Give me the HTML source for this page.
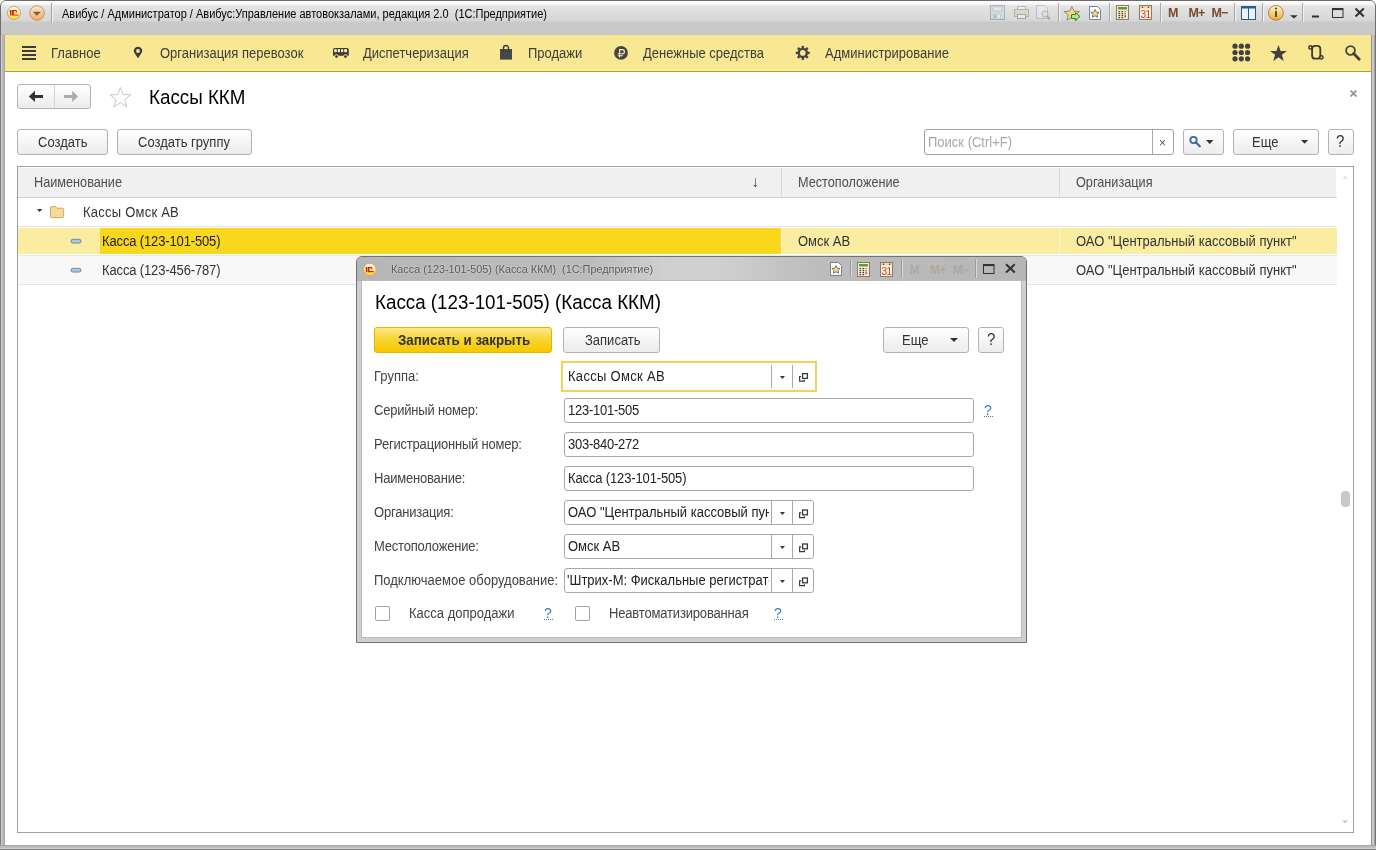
<!DOCTYPE html>
<html><head><meta charset="utf-8">
<style>
*{box-sizing:border-box;margin:0;padding:0}
html,body{width:1376px;height:850px;overflow:hidden;background:#fff;-webkit-font-smoothing:antialiased;font-family:"Liberation Sans",sans-serif;color:#333}
.a{position:absolute}
.t,.lbl,.val{will-change:transform;transform:translateY(1px) scaleY(1.1);transform-origin:0 12.5px}
.big{transform:translateY(1px) scaleY(1.07)!important;transform-origin:0 17.5px!important}
.ttl{transform:translateY(0.5px) scaleY(1.15)!important;transform-origin:0 11.8px!important}
.nos{transform:none!important}
.t{position:absolute;white-space:nowrap;font-size:13px;line-height:16px}
#frame{left:0;top:0;width:1376px;height:850px;background:linear-gradient(90deg,#8a8a8a 0,#c4c4c4 2px,#b8b8b8 5px);border-radius:6px 6px 0 0;border:1px solid #6d6d6d}
#titlebar{left:1px;top:1px;width:1374px;height:34px;border-radius:5px 5px 0 0;background:linear-gradient(#fefefe 0px,#f8f8f8 3px,#e4e4e4 5px,#d6d6d6 20px,#c9c9c9 21px,#c8c8c8 33px,#c4c2b0 34px)}
#menubar{left:5px;top:35px;width:1366px;height:37px;background:linear-gradient(#f9e893 0,#f9e893 34px,#fdf08a 35px);border-bottom:1px solid #aa9c42}
#content{left:5px;top:72px;width:1366px;height:773px;background:#fff}
.btn{position:absolute;border:1px solid #b3b3b3;border-radius:3px;background:linear-gradient(#ffffff,#ececec);}
.fld{position:absolute;border:1px solid #a8a8a8;border-radius:3px;background:#fff}
.lbl{position:absolute;white-space:nowrap;font-size:13px;line-height:16px;color:#444}
.val{position:absolute;white-space:nowrap;font-size:13px;line-height:16px;color:#222;overflow:hidden}
</style></head><body>
<div id="frame" class="a"></div>
<div id="titlebar" class="a"></div>
<div id="menubar" class="a"></div>
<div id="content" class="a"></div>
<div class="a" style="left:0;top:35px;width:5px;height:815px;background:linear-gradient(90deg,#7a7a7a 0,#7a7a7a 1px,#d0d0d0 1px,#d0d0d0 2px,#b8b8b8 2px,#b8b8b8 4px,#a8a8a8 4px)"></div>
<div class="a" style="left:1371px;top:35px;width:5px;height:815px;background:linear-gradient(90deg,#949494 0,#949494 1px,#c8c8c8 1px,#c8c8c8 3px,#a4a4a4 3px,#a4a4a4 4px,#747474 4px)"></div>
<div class="a" style="left:0;top:845px;width:1376px;height:5px;background:linear-gradient(#a8a8a8 0,#a8a8a8 1px,#b8b8b8 1px,#b8b8b8 2px,#c0c0c0 2px,#c0c0c0 3px,#d0d0d0 3px,#d0d0d0 4px,#808080 4px)"></div>

<!-- title text -->
<div class="t ttl" style="left:62px;top:5px;font-size:11px;color:#000">Авибус / Администратор / Авибус:Управление автовокзалами, редакция 2.0&nbsp; (1С:Предприятие)</div>

<!-- menu items -->
<div class="t" style="left:51px;top:45px;color:#3c3c3c">Главное</div>
<div class="t" style="left:160px;top:45px;color:#3c3c3c">Организация перевозок</div>
<div class="t" style="left:363px;top:45px;color:#3c3c3c">Диспетчеризация</div>
<div class="t" style="left:528px;top:45px;color:#3c3c3c">Продажи</div>
<div class="t" style="left:643px;top:45px;color:#3c3c3c">Денежные средства</div>
<div class="t" style="left:825px;top:45px;color:#3c3c3c">Администрирование</div>

<!-- nav -->
<div class="btn" style="left:17px;top:84px;width:74px;height:25px"></div>
<div class="a" style="left:54px;top:85px;width:1px;height:23px;background:#d4d4d4"></div>
<div class="t big" style="left:149px;top:86px;font-size:18.8px;line-height:22px;color:#000">Кассы ККМ</div>


<!-- toolbar -->
<div class="btn" style="left:17px;top:129px;width:91px;height:26px"></div>
<div class="t" style="left:38px;top:134px;color:#333">Создать</div>
<div class="btn" style="left:117px;top:129px;width:135px;height:26px"></div>
<div class="t" style="left:138px;top:134px;color:#333">Создать группу</div>

<div class="fld" style="left:924px;top:129px;width:250px;height:26px;border-color:#a0a0a0"></div>
<div class="a" style="left:1152px;top:130px;width:1px;height:24px;background:#a8a8a8"></div>
<div class="t" style="left:928px;top:134px;color:#a8a8a8">Поиск (Ctrl+F)</div>
<div class="t" style="left:1159px;top:134px;font-size:12px;color:#555">×</div>
<div class="btn" style="left:1183px;top:129px;width:41px;height:26px"></div>
<div class="btn" style="left:1233px;top:129px;width:86px;height:26px"></div>
<div class="t" style="left:1252px;top:134px;color:#333">Еще</div>
<div class="btn" style="left:1328px;top:129px;width:26px;height:26px"></div>
<div class="t" style="left:1336px;top:133px;font-size:15px;color:#333">?</div>

<!-- table -->
<div class="a" style="left:17px;top:166px;width:1337px;height:667px;border:1px solid #a0a0a0"></div>
<div class="a" style="left:18px;top:168px;width:1319px;height:30px;background:linear-gradient(90deg,#f0f0f0 1318px,#fff 1318px);border-bottom:1px solid #d2d2d2"></div>
<div class="a" style="left:781px;top:168px;width:1px;height:29px;background:#d8d8d8"></div>
<div class="a" style="left:1059px;top:168px;width:1px;height:29px;background:#d8d8d8"></div>
<div class="t" style="left:34px;top:174px;color:#4d4d4d;font-size:12.7px">Наименование</div>
<div class="t" style="left:798px;top:174px;color:#4d4d4d;font-size:12.7px">Местоположение</div>
<div class="t" style="left:1076px;top:174px;color:#4d4d4d;font-size:12.7px">Организация</div>
<div class="t" style="left:752px;top:173px;font-size:14px;color:#333">↓</div>

<!-- rows -->
<div class="a" style="left:18px;top:226px;width:1319px;height:1px;background:#e4e4e4"></div>
<div class="t" style="left:83px;top:204px;color:#333;letter-spacing:0.23px">Кассы Омск АВ</div>

<div class="a" style="left:18px;top:228px;width:1319px;height:26px;background:#faeca0"></div>
<div class="a" style="left:100px;top:228px;width:681px;height:26px;background:#f9d71c"></div>
<div class="a" style="left:781px;top:228px;width:1px;height:26px;background:#fffbe8"></div>
<div class="a" style="left:1059px;top:228px;width:1px;height:26px;background:#fdf5cf"></div>
<div class="t" style="left:102px;top:233px;color:#222;letter-spacing:-0.14px">Касса (123-101-505)</div>
<div class="t" style="left:798px;top:233px;color:#333">Омск АВ</div>
<div class="t" style="left:1076px;top:233px;color:#333">ОАО "Центральный кассовый пункт"</div>

<div class="a" style="left:18px;top:255px;width:1319px;height:1px;background:#e8e8e8"></div>
<div class="a" style="left:18px;top:256px;width:1319px;height:28px;background:#f8f8f8"></div>
<div class="a" style="left:18px;top:284px;width:1319px;height:1px;background:#e4e4e4"></div>
<div class="t" style="left:102px;top:262px;color:#333;letter-spacing:-0.14px">Касса (123-456-787)</div>
<div class="t" style="left:1076px;top:262px;color:#333">ОАО "Центральный кассовый пункт"</div>

<!-- scrollbar -->
<div class="a" style="left:1341px;top:491px;width:9px;height:16px;background:#c8c8c8;border-radius:4px"></div>

<!-- main icons -->
<svg class="a" style="left:0;top:0" width="1376" height="850">
<defs>
<linearGradient id="g1c" x1="0" y1="0" x2="0" y2="1"><stop offset="0" stop-color="#fffbe0"/><stop offset="0.55" stop-color="#fff2a0"/><stop offset="0.75" stop-color="#fde848"/><stop offset="1" stop-color="#f8dc40"/></linearGradient>
<linearGradient id="gdd" x1="0" y1="0" x2="0" y2="1"><stop offset="0" stop-color="#fde9d0"/><stop offset="1" stop-color="#eeac5c"/></linearGradient>
<linearGradient id="ginfo" x1="0" y1="0" x2="0" y2="1"><stop offset="0" stop-color="#fff4d8"/><stop offset="1" stop-color="#f0a838"/></linearGradient>
</defs>
<!-- 1C logo -->
<circle cx="14" cy="12.9" r="6.5" fill="url(#g1c)" stroke="#b89470" stroke-width="0.8"/>
<path d="M9 11.4 L10 10 L11.5 10 L11.5 15.6 L10 15.6 L10 11.4 Z" fill="#c42a10"/>
<path d="M12 10 L16.6 10 L16.6 11.2 L13.8 11.2 L13.8 14.4 L18.5 14.4 L18.5 15.6 L12 15.6 Z" fill="#d42010"/><rect x="15.8" y="11.2" width="1.3" height="1.4" fill="#b83010"/>
<!-- dropdown circle -->
<circle cx="37" cy="13" r="7.3" fill="url(#gdd)" stroke="#b89070" stroke-width="0.9"/>
<path d="M32.9 11.8 L40.9 11.8 L36.9 15.8 Z" fill="#6d6152"/>
<rect x="51" y="3" width="1" height="20" fill="#a0a0a0"/><rect x="52" y="3" width="1" height="20" fill="#f4f4f4"/>

<!-- faded save -->
<g opacity="0.45">
<rect x="990.5" y="5.5" width="14" height="14" fill="#c8d8e0" stroke="#5a7888"/>
<rect x="993" y="7" width="9" height="4" fill="#e8f0f4" stroke="#6a8898" stroke-width="0.6"/>
<rect x="993.5" y="14" width="7" height="5" fill="#f0f0f0" stroke="#6a8898" stroke-width="0.6"/>
<rect x="994.5" y="15" width="2" height="3" fill="#607080"/>
</g>
<!-- faded printer -->
<g opacity="0.4">
<rect x="1017.5" y="6.5" width="8" height="4" fill="#fff" stroke="#777"/>
<rect x="1014.5" y="9.5" width="14" height="7" fill="#d8c8a8" stroke="#777"/>
<rect x="1017.5" y="14.5" width="8" height="4" fill="#fff" stroke="#555"/>
</g>
<!-- faded preview -->
<g opacity="0.4">
<path d="M1036.5 5.5 L1044.5 5.5 L1047.5 8.5 L1047.5 18.5 L1036.5 18.5 Z" fill="#e8eef4" stroke="#7890a8"/>
<circle cx="1045" cy="14" r="3" fill="#e0e0e0" stroke="#7a6a5a"/>
<path d="M1047 16 L1050 19.5" stroke="#8a5a3a" stroke-width="2"/>
</g>
<rect x="1058" y="3" width="1" height="19" fill="#a8a8a8"/><rect x="1059" y="3" width="1" height="19" fill="#f2f2f2"/>
<!-- star with arrow -->
<path d="M1071.8 6.5 L1074 11.2 L1079.5 11.6 L1075.3 15 L1076.6 20.3 L1071.8 17.4 L1067 20.3 L1068.3 15 L1064.2 11.6 L1069.6 11.2 Z" fill="#f8d890" stroke="#8a8070" stroke-width="0.9"/>
<path d="M1071.5 14.5 L1075.5 14.5 L1075.5 12.5 L1080 16.5 L1075.5 20.5 L1075.5 18.5 L1071.5 18.5 Z" fill="#a8e888" stroke="#2a7a1a" stroke-width="0.9"/>
<!-- doc with star -->
<path d="M1089.5 6.5 L1097.5 6.5 L1100.5 9.5 L1100.5 19.5 L1089.5 19.5 Z" fill="#fbfdff" stroke="#70849a"/>
<path d="M1095 9.5 L1096.4 12.2 L1099 12.5 L1097.1 14.4 L1097.6 17.2 L1095 15.8 L1092.4 17.2 L1092.9 14.4 L1091 12.5 L1093.6 12.2 Z" fill="#f4d890" stroke="#6a5a40" stroke-width="0.8"/>
<rect x="1109" y="3" width="1" height="19" fill="#a8a8a8"/><rect x="1110" y="3" width="1" height="19" fill="#f2f2f2"/>
<!-- calculator -->
<rect x="1116.5" y="5.5" width="12" height="14" fill="#f8ecd4" stroke="#8a7c64"/>
<rect x="1118" y="7" width="9" height="2.5" fill="#5a9a40"/>
<g fill="#4a3a2a">
<rect x="1118.5" y="11" width="1.6" height="1.2"/><rect x="1121.5" y="11" width="1.6" height="1.2"/><rect x="1124.5" y="11" width="1.2" height="1.2" fill="#e05040"/>
<rect x="1118.5" y="13" width="1.6" height="1.2"/><rect x="1121.5" y="13" width="1.6" height="1.2"/><rect x="1124.5" y="13.3" width="1.2" height="1.2"/>
<rect x="1118.5" y="15" width="1.6" height="1.2"/><rect x="1121.5" y="15" width="1.6" height="1.2"/><rect x="1124.5" y="15.3" width="1.2" height="2"/>
<rect x="1118.5" y="17" width="1.6" height="1.2"/><rect x="1121.5" y="17" width="1.6" height="1.2"/>
</g>
<!-- calendar -->
<rect x="1139.5" y="5.5" width="12" height="14" fill="#fdf3e4" stroke="#8a7c64"/>
<rect x="1140" y="6" width="11" height="2.5" fill="#f0d8a0"/>
<circle cx="1142.5" cy="7.3" r="0.7" fill="#3a2a1a"/><circle cx="1148.5" cy="7.3" r="0.7" fill="#3a2a1a"/>
<text x="1140.5" y="18.3" font-family="Liberation Sans" font-size="10" fill="#d03818" letter-spacing="-0.5">31</text>
<rect x="1160" y="3" width="1" height="19" fill="#a8a8a8"/><rect x="1161" y="3" width="1" height="19" fill="#f2f2f2"/>
<!-- M M+ M- -->
<text x="1168" y="17.3" font-family="Liberation Sans" font-weight="bold" font-size="12.5" fill="#7a4a2a">M</text>
<text x="1188.5" y="17.3" font-family="Liberation Sans" font-weight="bold" font-size="12.5" fill="#7a4a2a" letter-spacing="-0.8">M+</text>
<text x="1211.5" y="17.3" font-family="Liberation Sans" font-weight="bold" font-size="12.5" fill="#7a4a2a" letter-spacing="-0.8">M−</text>
<rect x="1234" y="3" width="1" height="19" fill="#a8a8a8"/><rect x="1235" y="3" width="1" height="19" fill="#f2f2f2"/>
<!-- panel icon -->
<rect x="1241.5" y="6.5" width="14" height="13" fill="#eaf2fa" stroke="#2a5a8a"/>
<rect x="1241.5" y="6.5" width="14" height="2" fill="#2a5a8a"/>
<rect x="1248" y="8" width="1" height="11" fill="#2a5a8a"/>
<rect x="1262" y="3" width="1" height="19" fill="#a8a8a8"/><rect x="1263" y="3" width="1" height="19" fill="#f2f2f2"/>
<!-- info -->
<circle cx="1275.9" cy="12.9" r="7.4" fill="url(#ginfo)" stroke="#b07a30" stroke-width="0.9"/>
<rect x="1275" y="11" width="2" height="6" fill="#3a6a10"/><circle cx="1276" cy="8.6" r="1.1" fill="#3a6a10"/>
<path d="M1290 15.2 L1297.8 15.2 L1293.9 18.5 Z" fill="#333"/>
<rect x="1302" y="3" width="1" height="19" fill="#a8a8a8"/><rect x="1303" y="3" width="1" height="19" fill="#f2f2f2"/>
<!-- min max close -->
<rect x="1312" y="15.5" width="7" height="2" fill="#333"/>
<rect x="1332.5" y="8.5" width="10.5" height="9" fill="none" stroke="#333" stroke-width="1"/>
<rect x="1332.5" y="8.5" width="10.5" height="1.6" fill="#333"/>
<path d="M1355.5 8.5 L1363.8 16.5 M1363.8 8.5 L1355.5 16.5" stroke="#333" stroke-width="2"/>

<!-- hamburger -->
<g fill="#3c3c3c"><rect x="22" y="46" width="14" height="2"/><rect x="22" y="50" width="14" height="2"/><rect x="22" y="54" width="14" height="2"/><rect x="22" y="58" width="14" height="2"/></g>
<!-- pin -->
<path d="M138 58.3 L134.6 53.2 A4.1 4.1 0 1 1 141.4 53.2 Z" fill="#3e3c38"/>
<circle cx="138" cy="51" r="1.9" fill="#fbe99a"/>
<!-- bus -->
<path d="M333 49.5 Q333 48 334.5 48 L347 48 Q348.8 48 348.8 50 L348.8 55.8 L333 55.8 Z" fill="#3e3a30"/>
<g fill="#fbf2c0"><rect x="334.2" y="49" width="2.6" height="3.3" rx="0.8"/><rect x="337.8" y="49" width="2.2" height="3.3" rx="0.8"/><rect x="341" y="49" width="2.2" height="3.3" rx="0.8"/><rect x="344.2" y="49" width="2.8" height="3.3" rx="0.8"/></g>
<circle cx="336.5" cy="56.3" r="2.1" fill="#fbe99a"/><circle cx="345.5" cy="56.3" r="2.1" fill="#fbe99a"/>
<circle cx="336.5" cy="56.6" r="1.4" fill="#3e3a30"/><circle cx="345.5" cy="56.6" r="1.4" fill="#3e3a30"/>
<!-- bag -->
<rect x="500" y="49" width="12" height="10.6" fill="#474747"/>
<path d="M503.5 52 L503.5 48 A2.5 2.5 0 0 1 508.5 48 L508.5 52" fill="none" stroke="#3e3a30" stroke-width="1.4"/>
<!-- ruble -->
<circle cx="621" cy="52.9" r="6.9" fill="#454545"/>
<path d="M619.6 57.5 L619.6 49.6 L622.3 49.6 A2.1 2.1 0 0 1 622.3 53.8 L617.8 53.8 M617.8 55.8 L622.8 55.8" fill="none" stroke="#fbf0c0" stroke-width="1.1"/>
<!-- gear -->
<g transform="translate(802.8,52.9)" fill="#454545">
<circle r="5.2"/>
<rect x="-1.2" y="-7" width="2.4" height="14"/><rect x="-7" y="-1.2" width="14" height="2.4"/>
<rect x="-1.2" y="-7" width="2.4" height="14" transform="rotate(45)"/><rect x="-1.2" y="-7" width="2.4" height="14" transform="rotate(-45)"/>
<circle r="2.8" fill="#fbe99a"/>
</g>
<!-- grid -->
<g fill="#414141">
<circle cx="1235" cy="46.2" r="2.6"/><circle cx="1241.3" cy="46.2" r="2.6"/><circle cx="1247.6" cy="46.2" r="2.6"/>
<circle cx="1235" cy="52.5" r="2.6"/><circle cx="1241.3" cy="52.5" r="2.6"/><circle cx="1247.6" cy="52.5" r="2.6"/>
<circle cx="1235" cy="58.8" r="2.6"/><circle cx="1241.3" cy="58.8" r="2.6"/><circle cx="1247.6" cy="58.8" r="2.6"/>
</g>
<!-- star -->
<path d="M1278.5 45 L1280.6 50.9 L1286.9 51 L1281.9 54.8 L1283.7 61 L1278.5 57.3 L1273.3 61 L1275.1 54.8 L1270.1 51 L1276.4 50.9 Z" fill="#414141"/>
<!-- history scroll -->
<rect x="1312.1" y="45.9" width="8.2" height="12.8" rx="3" fill="none" stroke="#3e3a30" stroke-width="1.8"/>
<circle cx="1310.4" cy="47.4" r="1.6" fill="#fbe99a" stroke="#3e3a30" stroke-width="1.5"/>
<circle cx="1321.4" cy="57.4" r="1.6" fill="#fbe99a" stroke="#3e3a30" stroke-width="1.5"/>
<!-- search -->
<circle cx="1350.5" cy="50.5" r="4.4" fill="none" stroke="#414141" stroke-width="1.8"/>
<path d="M1353.6 53.6 L1359.2 59.2" stroke="#414141" stroke-width="2.8" stroke-linecap="round"/>

<path d="M1350.5 90.5 L1356.5 96.5 M1356.5 90.5 L1350.5 96.5" stroke="#8c8c8c" stroke-width="1.7"/>
<!-- nav arrows -->
<path d="M28.8 96.4 L35 90.8 L35 94.9 L43 94.9 L43 97.9 L35 97.9 L35 102 Z" fill="#333"/>
<path d="M78.1 96.4 L72.2 90.8 L72.2 94.9 L63.9 94.9 L63.9 97.9 L72.2 97.9 L72.2 102 Z" fill="#ababab"/>
<!-- star outline -->
<path d="M120.4 87.6 L123 94.6 L130.8 94.8 L124.7 99.5 L126.9 107 L120.4 102.6 L113.9 107 L116.1 99.5 L110 94.8 L117.8 94.6 Z" fill="none" stroke="#c4c4c4" stroke-width="1"/>

<!-- search button icon -->
<circle cx="1193.5" cy="140" r="3.2" fill="none" stroke="#3a6aa0" stroke-width="1.8"/>
<path d="M1195.8 142.3 L1199.8 146.3" stroke="#3a6aa0" stroke-width="2.2" stroke-linecap="round"/>
<path d="M1206 140 L1213.4 140 L1209.7 144 Z" fill="#333"/>
<path d="M1301 140 L1308.2 140 L1304.6 143.8 Z" fill="#333"/>

<!-- table tree icons -->
<path d="M37 209 L42.3 209 L39.65 212 Z" fill="#333"/>
<path d="M50.5 208 Q50.5 206.6 51.8 206.6 L55.5 206.6 L57 208.2 L62.5 208.2 Q63.7 208.2 63.7 209.5 L63.7 216.5 Q63.7 217.6 62.5 217.6 L51.7 217.6 Q50.5 217.6 50.5 216.5 Z" fill="#f6dc98" stroke="#c8a050" stroke-width="0.9"/>
<rect x="71" y="239.3" width="10" height="3.8" rx="1.9" fill="#a8c8e0" stroke="#5a7898" stroke-width="0.8"/>
<rect x="71" y="268.3" width="10" height="3.8" rx="1.9" fill="#a8c8e0" stroke="#5a7898" stroke-width="0.8"/>
<!-- scroll arrows -->
<path d="M1342.4 178.8 L1348 178.8 L1345.2 176 Z" fill="#dcdcdc"/>
<path d="M1342 820.5 L1348 820.5 L1345 823.5 Z" fill="#c8c8c8"/>
</svg>

<!-- DIALOG -->
<div class="a" style="left:356px;top:256px;width:671px;height:387px;border:1px solid #727272;border-radius:6px 6px 0 0;background:#cfcfcf"></div>
<div class="a" style="left:357px;top:257px;width:669px;height:24px;border-radius:5px 5px 0 0;background:linear-gradient(90deg,#b6b6b6 0%,#bcbcbc 35%,#cfcfcf 46%,#d0d0d0 54%,#bdbdbd 68%,#b6b6b6 100%)"></div>
<div class="a" style="left:361px;top:280px;width:661px;height:358px;background:#bababa"></div>
<div class="a" style="left:362px;top:281px;width:659px;height:356px;background:#fff"></div>
<div class="t nos" style="left:391px;top:260.5px;font-size:10.85px;color:#575757;text-shadow:0 0 2px rgba(255,255,255,.7)">Касса (123-101-505) (Касса ККМ)&nbsp; (1С:Предприятие)</div>

<div class="t big" style="left:375px;top:291px;font-size:18.8px;line-height:22px;color:#000">Касса (123-101-505) (Касса ККМ)</div>

<div class="a" style="left:374px;top:327px;width:178px;height:26px;border:1px solid #e2b500;border-radius:3px;background:linear-gradient(#fde88a,#f9d42c 50%,#f5c800)"></div>
<div class="t" style="left:398px;top:332px;font-weight:bold;font-size:13.35px;color:#333">Записать и закрыть</div>
<div class="btn" style="left:563px;top:327px;width:97px;height:26px"></div>
<div class="t" style="left:585px;top:332px;color:#333">Записать</div>
<div class="btn" style="left:883px;top:327px;width:86px;height:26px"></div>
<div class="t" style="left:902px;top:332px;color:#333">Еще</div>
<div class="btn" style="left:978px;top:327px;width:26px;height:26px"></div>
<div class="t" style="left:987px;top:331px;font-size:15px;color:#333">?</div>

<div class="lbl" style="left:374px;top:368px">Группа:</div>
<div class="lbl" style="left:374px;top:402px;letter-spacing:-0.2px">Серийный номер:</div>
<div class="lbl" style="left:374px;top:436px;letter-spacing:-0.2px">Регистрационный номер:</div>
<div class="lbl" style="left:374px;top:470px;letter-spacing:-0.2px">Наименование:</div>
<div class="lbl" style="left:374px;top:504px;letter-spacing:-0.2px">Организация:</div>
<div class="lbl" style="left:374px;top:538px;letter-spacing:-0.2px">Местоположение:</div>
<div class="lbl" style="left:374px;top:572px">Подключаемое оборудование:</div>

<div class="a" style="left:561px;top:361px;width:256px;height:31px;border:2px solid #f2d35a;background:#fff"></div>
<div class="a" style="left:771px;top:365px;width:1px;height:23px;background:#a8a8a8"></div>
<div class="a" style="left:792px;top:365px;width:1px;height:23px;background:#a8a8a8"></div>
<div class="val" style="left:568px;top:368px;letter-spacing:0.3px">Кассы Омск АВ</div>

<div class="fld" style="left:564px;top:398px;width:410px;height:25px"></div>
<div class="val" style="left:568px;top:402px;letter-spacing:-0.24px">123-101-505</div>
<div class="fld" style="left:564px;top:432px;width:410px;height:25px"></div>
<div class="val" style="left:568px;top:436px;letter-spacing:-0.24px">303-840-272</div>
<div class="fld" style="left:564px;top:466px;width:410px;height:25px"></div>
<div class="val" style="left:568px;top:470px;letter-spacing:-0.14px">Касса (123-101-505)</div>

<div class="fld" style="left:564px;top:500px;width:250px;height:25px"></div>
<div class="a" style="left:771px;top:501px;width:1px;height:23px;background:#a8a8a8"></div>
<div class="a" style="left:792px;top:501px;width:1px;height:23px;background:#a8a8a8"></div>
<div class="val" style="left:568px;top:504px;width:201px">ОАО "Центральный кассовый пункт"</div>

<div class="fld" style="left:564px;top:534px;width:250px;height:25px"></div>
<div class="a" style="left:771px;top:535px;width:1px;height:23px;background:#a8a8a8"></div>
<div class="a" style="left:792px;top:535px;width:1px;height:23px;background:#a8a8a8"></div>
<div class="val" style="left:568px;top:538px">Омск АВ</div>

<div class="fld" style="left:564px;top:568px;width:250px;height:25px"></div>
<div class="a" style="left:771px;top:569px;width:1px;height:23px;background:#a8a8a8"></div>
<div class="a" style="left:792px;top:569px;width:1px;height:23px;background:#a8a8a8"></div>
<div class="val" style="left:567px;top:572px;width:202px">'Штрих-М: Фискальные регистраторы</div>

<div class="a" style="left:375px;top:606px;width:15px;height:15px;border:1px solid #a0a0a0;border-radius:2px"></div>
<div class="lbl" style="left:409px;top:605px">Касса допродажи</div>
<div class="a" style="left:575px;top:606px;width:15px;height:15px;border:1px solid #a0a0a0;border-radius:2px"></div>
<div class="lbl" style="left:609px;top:605px;letter-spacing:-0.17px">Неавтоматизированная</div>

<svg class="a" style="left:0;top:0" width="1376" height="850">
<!-- dialog 1C logo -->
<circle cx="369.8" cy="269.4" r="6.2" fill="url(#g1c)" stroke="#d2a068" stroke-width="0.8"/>
<g transform="translate(-0.2,0.4) translate(369.8,269.4) scale(0.93) translate(-14,-13)"><path d="M9 11.4 L10 10 L11.5 10 L11.5 15.6 L10 15.6 L10 11.4 Z" fill="#c42a10"/>
<path d="M12 10 L16.6 10 L16.6 11.2 L13.8 11.2 L13.8 14.4 L18.5 14.4 L18.5 15.6 L12 15.6 Z" fill="#d42010"/><rect x="15.8" y="11.2" width="1.3" height="1.4" fill="#b83010"/></g>
<!-- doc star -->
<path d="M830.5 262.5 L838.5 262.5 L841.5 265.5 L841.5 275.5 L830.5 275.5 Z" fill="#fbfdff" stroke="#70849a"/>
<path d="M836 265.5 L837.4 268.2 L840 268.5 L838.1 270.4 L838.6 273.2 L836 271.8 L833.4 273.2 L833.9 270.4 L832 268.5 L834.6 268.2 Z" fill="#f4d890" stroke="#6a5a40" stroke-width="0.8"/>
<rect x="850" y="259" width="1" height="19" fill="#9a9a9a"/><rect x="851" y="259" width="1" height="19" fill="#d8d8d8"/>
<!-- calculator -->
<rect x="857.5" y="262.5" width="12" height="14" fill="#f8ecd4" stroke="#8a7c64"/>
<rect x="859" y="264" width="9" height="2.5" fill="#5a9a40"/>
<g fill="#4a3a2a">
<rect x="859.5" y="268" width="1.6" height="1.2"/><rect x="862.5" y="268" width="1.6" height="1.2"/><rect x="865.5" y="268" width="1.2" height="1.2" fill="#e05040"/>
<rect x="859.5" y="270" width="1.6" height="1.2"/><rect x="862.5" y="270" width="1.6" height="1.2"/><rect x="865.5" y="270.3" width="1.2" height="1.2"/>
<rect x="859.5" y="272" width="1.6" height="1.2"/><rect x="862.5" y="272" width="1.6" height="1.2"/><rect x="865.5" y="272.3" width="1.2" height="2"/>
<rect x="859.5" y="274" width="1.6" height="1.2"/><rect x="862.5" y="274" width="1.6" height="1.2"/>
</g>
<!-- calendar -->
<rect x="880.5" y="262.5" width="12" height="14" fill="#fdf3e4" stroke="#8a7c64"/>
<rect x="881" y="263" width="11" height="2.5" fill="#f0d8a0"/>
<circle cx="883.5" cy="264.3" r="0.7" fill="#3a2a1a"/><circle cx="889.5" cy="264.3" r="0.7" fill="#3a2a1a"/>
<text x="881.5" y="275.3" font-family="Liberation Sans" font-size="10" fill="#d03818" letter-spacing="-0.5">31</text>
<rect x="901" y="259" width="1" height="19" fill="#9a9a9a"/><rect x="902" y="259" width="1" height="19" fill="#d8d8d8"/>
<g opacity="0.22">
<text x="909.5" y="274" font-family="Liberation Sans" font-weight="bold" font-size="12" fill="#9a6a4a">M</text>
<text x="930" y="274" font-family="Liberation Sans" font-weight="bold" font-size="12" fill="#9a6a4a" letter-spacing="-0.8">M+</text>
<text x="953" y="274" font-family="Liberation Sans" font-weight="bold" font-size="12" fill="#9a6a4a" letter-spacing="-0.8">M−</text>
</g>
<rect x="975" y="259" width="1" height="19" fill="#9a9a9a"/><rect x="976" y="259" width="1" height="19" fill="#d8d8d8"/>
<rect x="983.5" y="264.5" width="10.5" height="9" fill="none" stroke="#333" stroke-width="1"/>
<rect x="983.5" y="264.5" width="10.5" height="1.6" fill="#333"/>
<path d="M1006 264.3 L1014.8 272.6 M1014.8 264.3 L1006 272.6" stroke="#333" stroke-width="2"/>

<!-- group field icons -->
<path d="M779.9 376.1 L785 376.1 L782.45 379 Z" fill="#3a3a3a"/>
<rect x="802.6" y="373.6" width="4.8" height="4.8" fill="none" stroke="#3a3a3a" stroke-width="1.3"/><path d="M801.2 376.5 L799.6 376.5 L799.6 381.2 L804.4 381.2 L804.4 379.8" fill="none" stroke="#3a3a3a" stroke-width="1.2"/>
<!-- org -->
<path d="M779.9 512.1 L785 512.1 L782.45 515 Z" fill="#3a3a3a"/>
<rect x="802.6" y="510.0" width="4.8" height="4.8" fill="none" stroke="#3a3a3a" stroke-width="1.3"/><path d="M801.2 512.9 L799.6 512.9 L799.6 517.6 L804.4 517.6 L804.4 516.1999999999999" fill="none" stroke="#3a3a3a" stroke-width="1.2"/>
<!-- loc -->
<path d="M779.9 546.1 L785 546.1 L782.45 549 Z" fill="#3a3a3a"/>
<rect x="802.6" y="544.0" width="4.8" height="4.8" fill="none" stroke="#3a3a3a" stroke-width="1.3"/><path d="M801.2 546.9 L799.6 546.9 L799.6 551.6 L804.4 551.6 L804.4 550.1999999999999" fill="none" stroke="#3a3a3a" stroke-width="1.2"/>
<!-- equip -->
<path d="M779.9 580.1 L785 580.1 L782.45 583 Z" fill="#3a3a3a"/>
<rect x="802.6" y="578.0" width="4.8" height="4.8" fill="none" stroke="#3a3a3a" stroke-width="1.3"/><path d="M801.2 580.9 L799.6 580.9 L799.6 585.6 L804.4 585.6 L804.4 584.1999999999999" fill="none" stroke="#3a3a3a" stroke-width="1.2"/>

<!-- help marks -->
<text x="984" y="415" font-family="Liberation Sans" font-size="14" fill="#3a7ab8">?</text>
<path d="M984 416.5 L993 416.5" stroke="#3a7ab8" stroke-width="1" stroke-dasharray="1 1"/>
<text x="544" y="618" font-family="Liberation Sans" font-size="14" fill="#3a7ab8">?</text>
<path d="M544 619.5 L553 619.5" stroke="#3a7ab8" stroke-width="1" stroke-dasharray="1 1"/>
<text x="774" y="618" font-family="Liberation Sans" font-size="14" fill="#3a7ab8">?</text>
<path d="M774 619.5 L783 619.5" stroke="#3a7ab8" stroke-width="1" stroke-dasharray="1 1"/>
<!-- dialog Еще arrow -->
<path d="M950 338 L958 338 L954 342 Z" fill="#333"/>
</svg>

</body></html>
